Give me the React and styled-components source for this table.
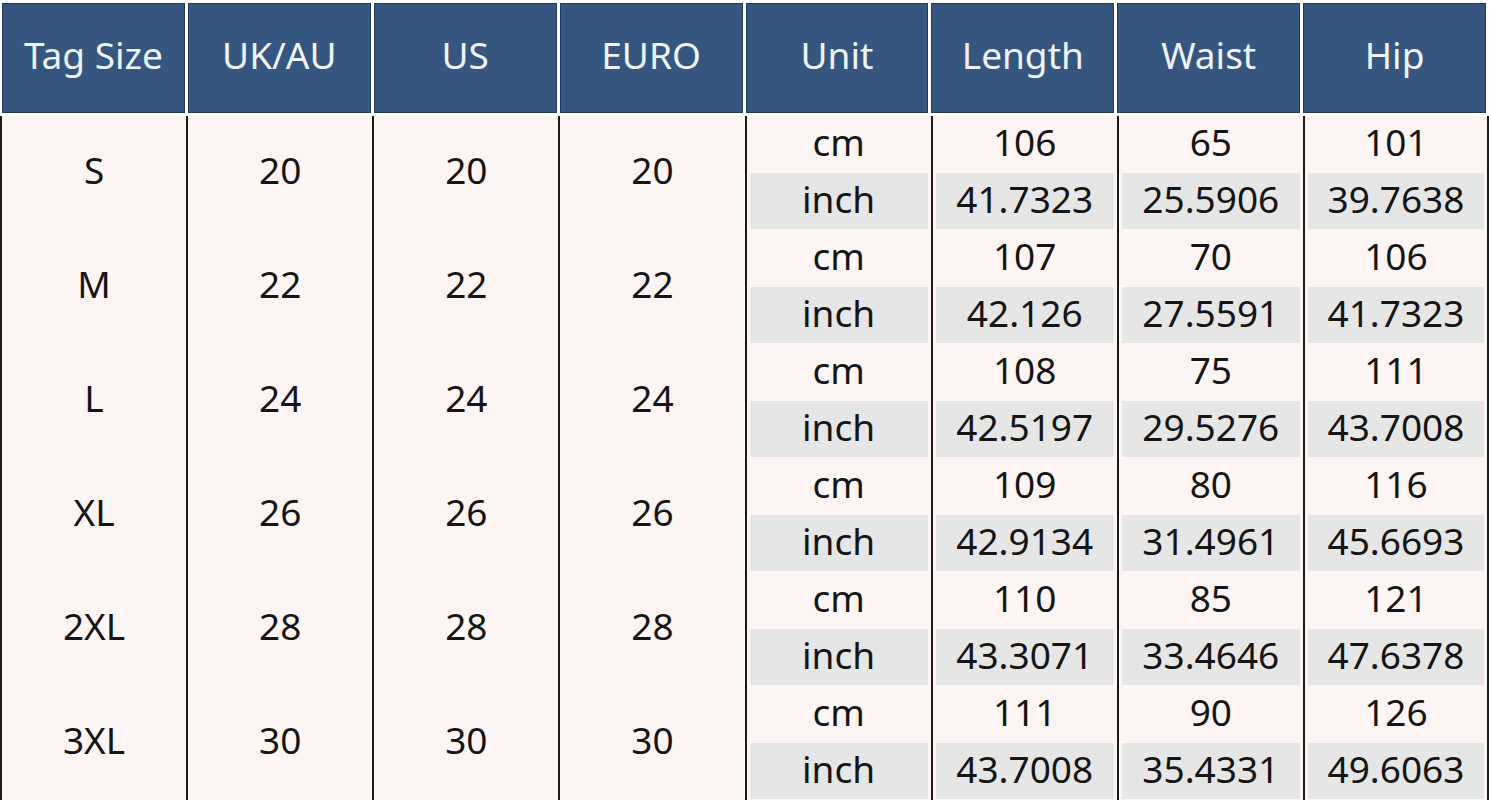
import React from 'react';
import styled, { createGlobalStyle } from 'styled-components';

const GlobalStyle = createGlobalStyle`
  html, body {
    margin: 0;
    padding: 0;
    background: #ffffff;
  }
  body {
    font-family: 'Noto Sans', 'Liberation Sans', sans-serif;
  }
`;

const headers = ['Tag Size', 'UK/AU', 'US', 'EURO', 'Unit', 'Length', 'Waist', 'Hip'];

const sizes = [
  { tag: 'S', uk: 20, us: 20, euro: 20, cm: [106, 65, 101], inch: ['41.7323', '25.5906', '39.7638'] },
  { tag: 'M', uk: 22, us: 22, euro: 22, cm: [107, 70, 106], inch: ['42.126', '27.5591', '41.7323'] },
  { tag: 'L', uk: 24, us: 24, euro: 24, cm: [108, 75, 111], inch: ['42.5197', '29.5276', '43.7008'] },
  { tag: 'XL', uk: 26, us: 26, euro: 26, cm: [109, 80, 116], inch: ['42.9134', '31.4961', '45.6693'] },
  { tag: '2XL', uk: 28, us: 28, euro: 28, cm: [110, 85, 121], inch: ['43.3071', '33.4646', '47.6378'] },
  { tag: '3XL', uk: 30, us: 30, euro: 30, cm: [111, 90, 126], inch: ['43.7008', '35.4331', '49.6063'] },
];

export default function App() {
  return (
    <>
      <GlobalStyle />
      <Chart>
        <HeadRow>
          {headers.map((h) => (
            <HeadCell key={h}>{h}</HeadCell>
          ))}
        </HeadRow>
        <Body>
          {sizes.map((s) => (
            <React.Fragment key={s.tag}>
              <SizeCell>{s.tag}</SizeCell>
              <SizeCell>{s.uk}</SizeCell>
              <SizeCell>{s.us}</SizeCell>
              <SizeCell>{s.euro}</SizeCell>
              <DataCell>cm</DataCell>
              {s.cm.map((v, i) => (
                <DataCell key={'c' + i} $last={i === 2}>{v}</DataCell>
              ))}
              <DataCell $inch>inch</DataCell>
              {s.inch.map((v, i) => (
                <DataCell key={'i' + i} $inch $last={i === 2}>{v}</DataCell>
              ))}
            </React.Fragment>
          ))}
        </Body>
      </Chart>
    </>
  );
}

const Chart = styled.div`
  width: 1489px;
  height: 800px;
  overflow: hidden;
  background: #ffffff;
`;

const HeadRow = styled.div`
  display: grid;
  grid-template-columns: repeat(8, 1fr);
  width: 1487px;
  height: 116px;
`;

const HeadCell = styled.div`
  display: flex;
  align-items: center;
  justify-content: center;
  margin: 3px 1px 3px 2px;
  padding-bottom: 7px;
  background: #35567f;
  border: 1px solid #21395a;
  color: #eef3f8;
  font-size: 37px;
`;

const Body = styled.div`
  display: grid;
  grid-template-columns: repeat(8, 1fr);
  grid-template-rows: repeat(6, 56px 58px);
  background: #fdf5f4;
  color: #151515;
`;

const SizeCell = styled.div`
  grid-row: span 2;
  display: flex;
  align-items: center;
  justify-content: center;
  padding-bottom: 7px;
  border-left: 2px solid #1a1a1a;
  font-size: 37px;
`;

const DataCell = styled.div`
  display: flex;
  align-items: center;
  justify-content: center;
  padding-bottom: 5px;
  border-left: 2px solid #1a1a1a;
  border-right: ${(p) => (p.$last ? '2px solid #1a1a1a' : 'none')};
  background: ${(p) => (p.$inch ? 'linear-gradient(#e6e6e6, #e6e6e6)' : 'none')};
  background-repeat: no-repeat;
  background-position: center;
  background-size: calc(100% - 6px) calc(100% - 2px);
  font-size: 37px;
`;
